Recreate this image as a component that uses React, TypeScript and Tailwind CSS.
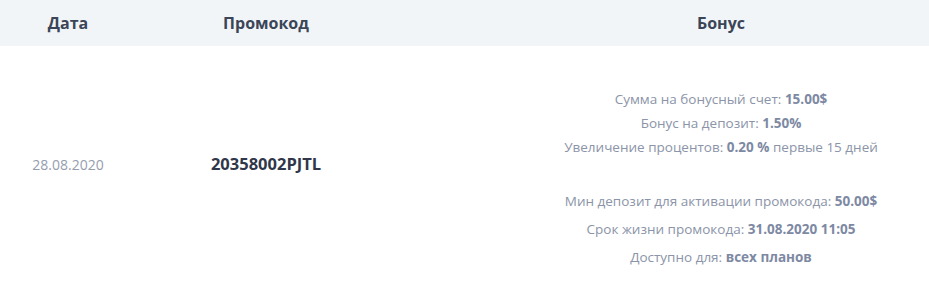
const Label = ({ label, value, tail }: { label: string; value: string; tail?: string }) => (
  <p>
    {label} <span className="font-bold text-[#7d89a3]">{value}</span>
    {tail ? ` ${tail}` : null}
  </p>
)

export default function App() {
  return (
    <div className="w-[929px] h-[302px] bg-white font-['Open_Sans',sans-serif]">
      <div className="grid grid-cols-[136px_260px_1fr] h-[46px] bg-[#f2f5f8] items-center text-[16px] font-bold text-[#3b4558]">
        <div className="text-center">Дата</div>
        <div className="text-center">Промокод</div>
        <div className="text-center pl-[117px]">Бонус</div>
      </div>

      <div className="grid grid-cols-[136px_260px_1fr]">
        <div className="text-center pt-[109px] text-[14px] leading-[20px] text-[#959cae]">28.08.2020</div>
        <div className="text-center pt-[107px] text-[16.5px] leading-[22px] font-bold text-[#30374a]">20358002PJTL</div>
        <div className="pl-[117px] pt-[41px] text-center text-[13.5px] text-[#8b94a8]">
          <div className="leading-[24px]">
            <Label label="Сумма на бонусный счет:" value="15.00$" />
            <Label label="Бонус на депозит:" value="1.50%" />
            <Label label="Увеличение процентов:" value="0.20 %" tail="первые 15 дней" />
          </div>
          <div className="leading-[28px] mt-[28px]">
            <Label label="Мин депозит для активации промокода:" value="50.00$" />
            <Label label="Срок жизни промокода:" value="31.08.2020 11:05" />
            <Label label="Доступно для:" value="всех планов" />
          </div>
        </div>
      </div>
    </div>
  )
}
